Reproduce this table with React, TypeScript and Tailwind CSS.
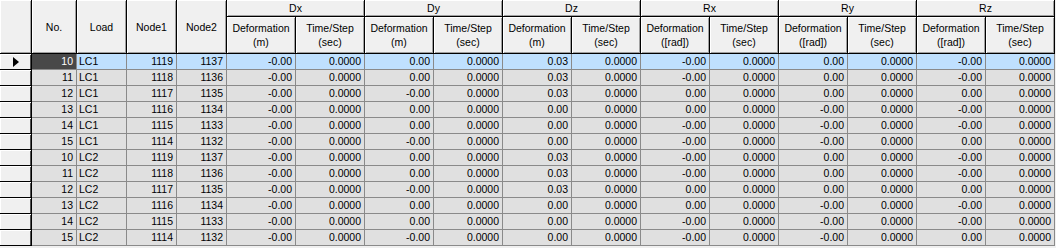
const groups = ["Dx", "Dy", "Dz", "Rx", "Ry", "Rz"];

const pattern: string[][] = [
  ["-0.00", "0.00", "0.03", "-0.00", "0.00", "-0.00"],
  ["-0.00", "0.00", "0.03", "-0.00", "0.00", "-0.00"],
  ["-0.00", "-0.00", "0.03", "0.00", "0.00", "0.00"],
  ["-0.00", "0.00", "0.00", "0.00", "-0.00", "-0.00"],
  ["-0.00", "0.00", "0.00", "-0.00", "-0.00", "-0.00"],
  ["-0.00", "-0.00", "0.00", "-0.00", "-0.00", "0.00"],
];

const rows = ["LC1", "LC2"].flatMap((load) =>
  pattern.map((vals, i) => ({
    no: 10 + i,
    load,
    node1: 1119 - i,
    node2: 1137 - i,
    vals,
  }))
);

const hdr =
  "bg-[#f0f0f0] border-r border-b border-black shadow-[inset_1px_1px_0_#ffffff,inset_-1px_-1px_0_#a0a0a0] flex items-center justify-center text-center leading-[14px]";

function DataCell({ children, sel, left }: { children: React.ReactNode; sel: boolean; left?: boolean }) {
  return (
    <div
      className={`border-r border-b border-[#8a8a8a] flex items-center whitespace-nowrap overflow-hidden ${
        left ? "justify-start pl-[2px]" : "justify-end pr-[3px]"
      } ${sel ? "bg-[#bfe0fe]" : "bg-[#e0e0e0]"}`}
    >
      {children}
    </div>
  );
}

export default function App() {
  return (
    <div className="w-[1056px] h-[248px] bg-[#f0f0f0] overflow-hidden text-black text-[10.5px] font-['Liberation_Sans',Arial,sans-serif]">
      <div className="grid grid-cols-[32px_45px_50px_50px_50px_repeat(12,69px)] grid-rows-[17px_37px_repeat(12,16px)]">
        <div className={`${hdr} row-span-2`} />
        <div className={`${hdr} row-span-2`}>No.</div>
        <div className={`${hdr} row-span-2`}>Load</div>
        <div className={`${hdr} row-span-2`}>Node1</div>
        <div className={`${hdr} row-span-2`}>Node2</div>
        {groups.map((g) => (
          <div key={g} className={`${hdr} col-span-2`}>
            {g}
          </div>
        ))}
        {groups.map((g) => {
          const unit = g.startsWith("R") ? "([rad])" : "(m)";
          return [
            <div key={g + "d"} className={hdr}>
              Deformation
              <br />
              {unit}
            </div>,
            <div key={g + "t"} className={hdr}>
              Time/Step
              <br />
              (sec)
            </div>,
          ];
        })}
        {rows.map((r, idx) => {
          const sel = idx === 0;
          return [
            <div
              key={idx + "h"}
              className="bg-[#f0f0f0] border-r border-b border-black shadow-[inset_1px_1px_0_#ffffff,inset_-1px_0_0_#505050] flex items-center pl-[13px]"
            >
              {sel && (
                <svg width="6" height="10" viewBox="0 0 6 10">
                  <polygon points="0,0 6,5 0,10" fill="#000" />
                </svg>
              )}
            </div>,
            <div
              key={idx + "n"}
              className={`border-r border-b border-[#8a8a8a] flex items-center justify-end pr-[3px] ${
                sel ? "bg-[#484848] text-white" : "bg-[#e0e0e0]"
              }`}
            >
              {r.no}
            </div>,
            <DataCell key={idx + "l"} sel={sel} left>
              {r.load}
            </DataCell>,
            <DataCell key={idx + "a"} sel={sel}>
              {r.node1}
            </DataCell>,
            <DataCell key={idx + "b"} sel={sel}>
              {r.node2}
            </DataCell>,
            ...r.vals.flatMap((v, j) => [
              <DataCell key={idx + "v" + j} sel={sel}>
                {v}
              </DataCell>,
              <DataCell key={idx + "t" + j} sel={sel}>
                0.0000
              </DataCell>,
            ]),
          ];
        })}
      </div>
    </div>
  );
}
